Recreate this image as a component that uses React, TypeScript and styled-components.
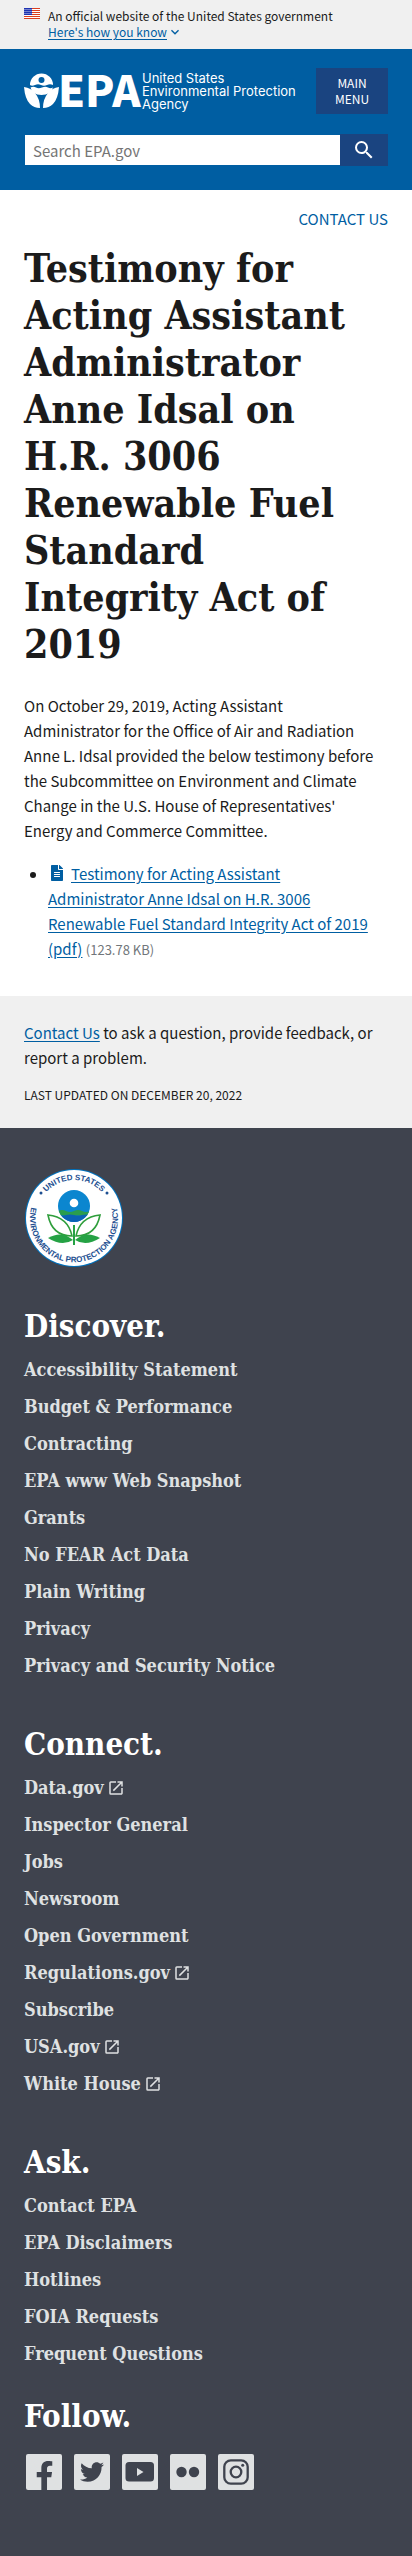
import React from "react";
import styled, { createGlobalStyle } from "styled-components";
import { FaFacebookF, FaTwitter, FaFileAlt } from "react-icons/fa";
import { MdOpenInNew, MdSearch, MdExpandMore } from "react-icons/md";

const sans = `"Noto Sans CJK SC", "Noto Sans", sans-serif`;
const serif = `"DejaVu Serif Condensed", "DejaVu Serif", serif`;

const GlobalStyle = createGlobalStyle`
  *, *::before, *::after { box-sizing: border-box; }
  body {
    margin: 0;
    background: #fff;
    color: #1b1b1b;
    font-family: ${sans};
    font-size: 15px;
    line-height: 25px;
  }
  a { color: #005ea2; text-underline-offset: 2px; }
`;

const Banner = styled.section`
  display: flex;
  gap: 8px;
  padding: 8px 24px 9px;
  background: #f0f0f0;
  font-size: 12px;
  line-height: 16px;
`;

const BannerText = styled.div`
  display: flex;
  flex-direction: column;
  align-items: flex-start;
`;

const BannerToggle = styled.button`
  display: flex;
  align-items: center;
  padding: 0;
  border: 0;
  background: none;
  color: #005ea2;
  font: inherit;
  cursor: pointer;

  span { text-decoration: underline; text-underline-offset: 2px; }
`;

const Header = styled.header`
  display: flex;
  flex-direction: column;
  gap: 20px;
  padding: 19px 24px 24px;
  background: #005ea2;
`;

const HeaderRow = styled.div`
  display: flex;
  align-items: center;
  justify-content: space-between;
`;

const LogoLink = styled.a`
  display: flex;
  align-items: center;
  gap: 3px;
  color: #fff;
  text-decoration: none;

  svg { overflow: visible; }
`;

const LogoName = styled.span`
  font-family: Inter, sans-serif;
  font-size: 13px;
  line-height: 13px;
  white-space: nowrap;
`;

const MenuButton = styled.button`
  width: 72px;
  height: 46px;
  padding: 0 16px;
  border: 0;
  background: #1a4480;
  color: #fff;
  font-family: ${sans};
  font-size: 12px;
  line-height: 16px;
  text-transform: uppercase;
  cursor: pointer;
`;

const SearchForm = styled.form`
  display: flex;
  height: 32px;
`;

const SearchInput = styled.input`
  flex: 1;
  min-width: 0;
  padding: 0 8px;
  border: 1px solid #005ea2;
  border-right: 0;
  border-radius: 0;
  background: #fff;
  font-family: ${sans};
  font-size: 15px;
  line-height: 25px;

  &::placeholder { color: #757575; opacity: 1; }
`;

const SearchButton = styled.button`
  display: flex;
  align-items: center;
  justify-content: center;
  width: 48px;
  padding: 0;
  border: 0;
  background: #1a4480;
  color: #fff;
  cursor: pointer;
`;

const Main = styled.main`
  padding: 16px 24px 34px;
`;

const ContactRow = styled.div`
  display: flex;
  justify-content: flex-end;
  text-transform: uppercase;

  a { text-decoration: none; }
`;

const Title = styled.h1`
  margin: 14px 0 25px;
  font-family: ${serif};
  font-size: 39px;
  line-height: 47px;
`;

const Paragraph = styled.p`
  margin: 0 12px 16px 0;
`;

const DocList = styled.ul`
  margin: 18px 12px 0 0;
  padding-left: 24px;
`;

const DocIcon = styled(FaFileAlt)`
  margin: 0 6px 0 1px;
  color: #005ea2;
  font-size: 16px;
  vertical-align: -1px;
`;

const FileSize = styled.span`
  color: #71767a;
  font-size: 13px;
`;

const Feedback = styled.section`
  padding: 24px;
  background: #f0f0f0;
`;

const Updated = styled.p`
  margin: 0;
  font-size: 12px;
  line-height: 18px;
  text-transform: uppercase;
`;

const Footer = styled.footer`
  padding: 40px 24px 65px;
  background: #3f434e;
`;

const Section = styled.section<{ $gap: number }>`
  margin-top: ${(p) => p.$gap}px;
`;

const FooterHeading = styled.h2`
  margin: 0;
  color: #fff;
  font-family: ${serif};
  font-size: 31px;
  line-height: 40px;
`;

const FooterList = styled.ul`
  display: flex;
  flex-direction: column;
  gap: 12px;
  margin: 11px 0 0;
  padding: 0;
  list-style: none;
`;

const FooterLink = styled.a`
  display: inline-flex;
  align-items: center;
  gap: 3px;
  color: #dfe1e2;
  font-family: ${serif};
  font-size: 18px;
  font-weight: 700;
  line-height: 25px;
  text-decoration: none;
  vertical-align: top;
`;

const SocialList = styled.ul`
  display: flex;
  gap: 8px;
  margin: 16px 0 0;
  padding: 0;
  list-style: none;

  a { display: block; height: 40px; color: #3f434e; }
`;

const Flag = () => (
  <svg width="16" height="11" viewBox="0 0 16 11" aria-hidden="true">
    <rect width="16" height="11" fill="#fff" />
    {[0, 2, 4, 6, 8, 10].map((y) => (
      <rect key={y} y={y} width="16" height="1" fill="#db3e1f" />
    ))}
    <rect width="8" height="7" fill="#1e33b1" />
    {[1, 3, 5].map((y) =>
      [1, 3, 5, 7].map((x) => (
        <circle key={`${x}-${y}`} cx={x} cy={y + 0.5} r="0.5" fill="#fff" />
      ))
    )}
  </svg>
);

const LogoMark = () => (
  <svg width="115" height="38" viewBox="0 0 115 38" aria-hidden="true" fill="#fff">
    <path d="M6 13a11.500 11.500 0 0 1 23 0q-3-1.500-6 0t-6 0-6 0-5 0z" />
    <circle cx="17.500" cy="8" r="3" fill="#005ea2" />
    <path d="M6.500 15.500q3-1.500 5.500 0t6 0 6 0 5 0q-2 7.500-11.500 7.500T6.500 15.500z" />
    <path d="M0 15q7 1 11 6 5 6 5 15-6 0-10-4Q1 27 0 15z" />
    <path d="M35 15q-7 1-11 6-5 6-5 15 6 0 10-4 5-5 6-17z" />
    <text
      x="34"
      y="35"
      fontFamily="'Noto Sans CJK SC', 'Noto Sans', sans-serif"
      fontWeight="900"
      fontSize="43"
    >
      EPA
    </text>
  </svg>
);

const Seal = () => (
  <svg width="100" height="100" viewBox="-50 -50 100 100" role="img" aria-label="EPA seal" display="block">
    <circle r="49" fill="#0071bc" />
    <circle r="48" fill="#fff" />
    <defs>
      <path id="seal-top" d="M-38 0A38 38 0 0 1 38 0" />
      <path id="seal-bottom" d="M-31 -31A44 44 0 1 0 31 -31" />
      <clipPath id="seal-globe"><circle cx="0" cy="-12" r="16" /></clipPath>
    </defs>
    <g fill="#1d4f91" fontFamily="'Liberation Sans', sans-serif" fontSize="8" fontWeight="700" textAnchor="middle">
      <text><textPath href="#seal-top" startOffset="50%">UNITED STATES</textPath></text>
      <text><textPath href="#seal-bottom" startOffset="50%">ENVIRONMENTAL PROTECTION AGENCY</textPath></text>
    </g>
    <circle cx="-33" cy="-25" r="1.500" fill="#1d4f91" />
    <circle cx="33" cy="-25" r="1.500" fill="#1d4f91" />
    <g clipPath="url(#seal-globe)">
      <rect x="-16" y="-28" width="32" height="32" fill="#0b86cf" />
      <path d="M-16 -7q4-2 8 0t8 0 8 0 8 0V-2q-4 1-8 0t-8 0-8 0-8 0z" fill="#2a9d4e" />
      <path d="M-16 -3q4 1 8 0t8 0 8 0 8 0V5H-16z" fill="#0a62b5" />
    </g>
    <circle cx="0" cy="-15" r="4.300" fill="#fff" />
    <g fill="#fff" stroke="#2f9e3c" strokeWidth="1.600">
      <path d="M-2 18Q-22 18-26 -3Q-6-1-2 18z" />
      <path d="M2 18Q22 18 26 -3Q6-1 2 18z" />
    </g>
    <g fill="#25a244">
      <path d="M-1 22Q-12 12-26 20Q-12 29-1 22z" />
      <path d="M1 22Q12 12 26 20Q12 29 1 22z" />
      <rect x="-1" y="7" width="2" height="20" />
    </g>
  </svg>
);

const Tile = ({ children }: { children: React.ReactNode }) => (
  <svg width="40" height="40" viewBox="-2 -2 40 40" aria-hidden="true">
    <rect width="36" height="36" rx="2" fill="#dfe1e2" />
    {children}
  </svg>
);

const socials = [
  { name: "Facebook", glyph: <FaFacebookF x="4" y="7" size={29} /> },
  { name: "Twitter", glyph: <FaTwitter x="6" y="6" size={24} /> },
  {
    name: "YouTube",
    glyph: (
      <>
        <rect x="3.500" y="8" width="28.500" height="19.500" rx="3.500" fill="currentColor" />
        <path d="M15 14l6.500 4-6.500 4z" fill="#dfe1e2" />
      </>
    ),
  },
  {
    name: "Flickr",
    glyph: (
      <g fill="currentColor">
        <circle cx="11.500" cy="18" r="5.200" />
        <circle cx="24" cy="18" r="5.200" />
      </g>
    ),
  },
  {
    name: "Instagram",
    glyph: (
      <g fill="none" stroke="currentColor" strokeWidth="2.300">
        <rect x="6.300" y="6.300" width="23.400" height="23.400" rx="6.500" />
        <circle cx="18" cy="18" r="5.300" />
        <circle cx="24.700" cy="11.300" r="1.500" fill="currentColor" stroke="none" />
      </g>
    ),
  },
];

type LinkItem = { label: string; external?: boolean };
const plain = (...labels: string[]): LinkItem[] => labels.map((label) => ({ label }));

const sections: { title: string; gap: number; links: LinkItem[] }[] = [
  {
    title: "Discover.",
    gap: 38,
    links: plain(
      "Accessibility Statement",
      "Budget & Performance",
      "Contracting",
      "EPA www Web Snapshot",
      "Grants",
      "No FEAR Act Data",
      "Plain Writing",
      "Privacy",
      "Privacy and Security Notice"
    ),
  },
  {
    title: "Connect.",
    gap: 46,
    links: [
      { label: "Data.gov", external: true },
      ...plain("Inspector General", "Jobs", "Newsroom", "Open Government"),
      { label: "Regulations.gov", external: true },
      { label: "Subscribe" },
      { label: "USA.gov", external: true },
      { label: "White House", external: true },
    ],
  },
  {
    title: "Ask.",
    gap: 46,
    links: plain("Contact EPA", "EPA Disclaimers", "Hotlines", "FOIA Requests", "Frequent Questions"),
  },
];

export default function App() {
  return (
    <>
      <GlobalStyle />
      <Banner aria-label="Official government website">
        <Flag />
        <BannerText>
          <span>An official website of the United States government</span>
          <BannerToggle type="button">
            <span>Here's how you know</span>
            <MdExpandMore size={16} />
          </BannerToggle>
        </BannerText>
      </Banner>
      <Header>
        <HeaderRow>
          <LogoLink href="#home">
            <LogoMark />
            <LogoName>
              United States
              <br />
              Environmental Protection
              <br />
              Agency
            </LogoName>
          </LogoLink>
          <MenuButton type="button">Main Menu</MenuButton>
        </HeaderRow>
        <SearchForm role="search">
          <SearchInput type="search" aria-label="Search EPA.gov" placeholder="Search EPA.gov" />
          <SearchButton type="submit" aria-label="Search">
            <MdSearch size={24} />
          </SearchButton>
        </SearchForm>
      </Header>
      <Main>
        <ContactRow>
          <a href="#contact">Contact Us</a>
        </ContactRow>
        <Title>
          Testimony for Acting Assistant Administrator Anne Idsal on H.R. 3006 Renewable Fuel
          Standard Integrity Act of 2019
        </Title>
        <Paragraph>
          On October 29, 2019, Acting Assistant Administrator for the Office of Air and Radiation
          Anne L. Idsal provided the below testimony before the Subcommittee on Environment and
          Climate Change in the U.S. House of Representatives' Energy and Commerce Committee.
        </Paragraph>
        <DocList>
          <li>
            <DocIcon />
            <a href="#testimony">
              Testimony for Acting Assistant Administrator Anne Idsal on H.R. 3006 Renewable Fuel
              Standard Integrity Act of 2019 (pdf)
            </a>{" "}
            <FileSize>(123.78 KB)</FileSize>
          </li>
        </DocList>
      </Main>
      <Feedback>
        <Paragraph>
          <a href="#contact">Contact Us</a> to ask a question, provide feedback, or report a
          problem.
        </Paragraph>
        <Updated>Last updated on December 20, 2022</Updated>
      </Feedback>
      <Footer>
        <Seal />
        {sections.map((section) => (
          <Section key={section.title} $gap={section.gap}>
            <FooterHeading>{section.title}</FooterHeading>
            <FooterList>
              {section.links.map((link) => (
                <li key={link.label}>
                  <FooterLink href="#link">
                    {link.label}
                    {link.external && <MdOpenInNew size={18} aria-label="external link" />}
                  </FooterLink>
                </li>
              ))}
            </FooterList>
          </Section>
        ))}
        <Section $gap={30}>
          <FooterHeading>Follow.</FooterHeading>
          <SocialList>
            {socials.map((social) => (
              <li key={social.name}>
                <a href="#social" aria-label={social.name}>
                  <Tile>{social.glyph}</Tile>
                </a>
              </li>
            ))}
          </SocialList>
        </Section>
      </Footer>
    </>
  );
}
